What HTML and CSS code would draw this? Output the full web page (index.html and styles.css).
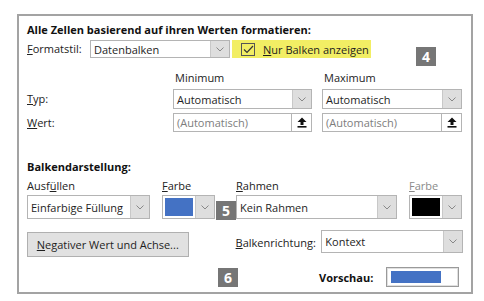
FILE: index.html
```html
<!DOCTYPE html>
<html lang="de">
<head>
    <meta charset="UTF-8">
    <title>Datenbalken formatieren</title>
    <link rel="stylesheet" href="styles.css">
</head>
<body>
    <div class="dialog">
        <div class="heading">Alle Zellen basierend auf ihren Werten formatieren:</div>

        <div class="style-row">
            <span class="label"><u>F</u>ormatstil:</span>
            <div class="dropdown style-select">
                <span class="value">Datenbalken</span>
                <span class="arrow"><svg width="8" height="5" viewBox="0 0 8 5"><path d="M0.5 0.5 L4 4 L7.5 0.5" fill="none" stroke="#888" stroke-width="1"/></svg></span>
            </div>
            <label class="only-bars">
                <span class="checkbox"><svg width="11" height="9" viewBox="0 0 11 9"><path d="M1 4.5 L4 7.5 L10 1" fill="none" stroke="#333" stroke-width="1.2"/></svg></span>
                <span><u>N</u>ur Balken anzeigen</span>
            </label>
        </div>

        <div class="minmax">
            <span></span>
            <span class="col-title">Minimum</span>
            <span class="col-title">Maximum</span>

            <span class="label"><u>T</u>yp:</span>
            <div class="dropdown">
                <span class="value">Automatisch</span>
                <span class="arrow"><svg width="8" height="5" viewBox="0 0 8 5"><path d="M0.5 0.5 L4 4 L7.5 0.5" fill="none" stroke="#888" stroke-width="1"/></svg></span>
            </div>
            <div class="dropdown">
                <span class="value">Automatisch</span>
                <span class="arrow"><svg width="8" height="5" viewBox="0 0 8 5"><path d="M0.5 0.5 L4 4 L7.5 0.5" fill="none" stroke="#888" stroke-width="1"/></svg></span>
            </div>

            <span class="label"><u>W</u>ert:</span>
            <div class="input">
                <span class="value muted">(Automatisch)</span>
                <span class="pick"><svg width="10" height="11" viewBox="0 0 10 11"><path d="M5 0.5 L9.5 5 L6.5 5 L6.5 8 L3.5 8 L3.5 5 L0.5 5 Z" fill="#111"/><rect x="0.5" y="9" width="9" height="1.6" fill="#111"/></svg></span>
            </div>
            <div class="input">
                <span class="value muted">(Automatisch)</span>
                <span class="pick"><svg width="10" height="11" viewBox="0 0 10 11"><path d="M5 0.5 L9.5 5 L6.5 5 L6.5 8 L3.5 8 L3.5 5 L0.5 5 Z" fill="#111"/><rect x="0.5" y="9" width="9" height="1.6" fill="#111"/></svg></span>
            </div>
        </div>

        <div class="heading section">Balkendarstellung:</div>

        <div class="bars">
            <span class="label">Ausf<u>ü</u>llen</span>
            <span class="label"><u>F</u>arbe</span>
            <span></span>
            <span class="label"><u>R</u>ahmen</span>
            <span class="label disabled"><u>F</u>arbe</span>

            <div class="dropdown tall fill-select">
                <span class="value">Einfarbige Füllung</span>
                <span class="arrow"><svg width="8" height="5" viewBox="0 0 8 5"><path d="M0.5 0.5 L4 4 L7.5 0.5" fill="none" stroke="#888" stroke-width="1"/></svg></span>
            </div>
            <div class="color tall">
                <span class="swatch blue"></span>
                <span class="arrow"><svg width="8" height="5" viewBox="0 0 8 5"><path d="M0.5 0.5 L4 4 L7.5 0.5" fill="none" stroke="#888" stroke-width="1"/></svg></span>
            </div>
            <span class="badge">5</span>
            <div class="dropdown tall border-select">
                <span class="value">Kein Rahmen</span>
                <span class="arrow"><svg width="8" height="5" viewBox="0 0 8 5"><path d="M0.5 0.5 L4 4 L7.5 0.5" fill="none" stroke="#888" stroke-width="1"/></svg></span>
            </div>
            <div class="color tall">
                <span class="swatch black"></span>
                <span class="arrow"><svg width="8" height="5" viewBox="0 0 8 5"><path d="M0.5 0.5 L4 4 L7.5 0.5" fill="none" stroke="#888" stroke-width="1"/></svg></span>
            </div>
        </div>

        <div class="axis-row">
            <button class="btn"><u>N</u>egativer Wert und Achse...</button>
            <span class="label direction-label"><u>B</u>alkenrichtung:</span>
            <div class="dropdown direction">
                <span class="value">Kontext</span>
                <span class="arrow"><svg width="8" height="5" viewBox="0 0 8 5"><path d="M0.5 0.5 L4 4 L7.5 0.5" fill="none" stroke="#888" stroke-width="1"/></svg></span>
            </div>
        </div>

        <div class="preview-row">
            <span class="badge">6</span>
            <span class="preview-label">Vorschau:</span>
            <div class="preview"><span class="preview-bar"></span></div>
        </div>

        <span class="badge badge-4">4</span>
    </div>
</body>
</html>
```

FILE: styles.css
```css
body {
    margin: 0;
    padding: 14px 0 0 17px;
    background-color: #fff;
    font-family: "Open Sans", "Noto Sans", Arial, sans-serif;
    font-size: 11px;
    color: #1e1e1e;
}

.dialog {
    position: relative;
    box-sizing: border-box;
    width: 456px;
    height: 280px;
    border: 2px solid #a3a3a3;
    padding: 6px 8px 0 8px;
}

u {
    text-decoration-thickness: 1px;
    text-underline-offset: 1px;
}

.heading {
    font-weight: 700;
    line-height: 15px;
    color: #111;
}

.label {
    line-height: 14px;
    color: #222;
}

.disabled {
    color: #8a8a8a;
}

/* dropdowns and inputs */
.dropdown,
.input,
.color {
    box-sizing: border-box;
    display: flex;
    align-items: stretch;
    border: 1px solid #b4b4b4;
    background-color: #fff;
}

.value {
    flex: 1;
    display: flex;
    align-items: center;
    padding-left: 3px;
    white-space: nowrap;
    overflow: hidden;
}

.muted {
    color: #7d7d7d;
}

.arrow {
    width: 18px;
    display: flex;
    align-items: center;
    justify-content: center;
    background-color: #dedede;
    border-left: 1px solid #c8c8c8;
}

.pick {
    width: 19px;
    display: flex;
    align-items: center;
    justify-content: center;
    border-left: 1px solid #b4b4b4;
}

/* Formatstil row */
.style-row {
    display: flex;
    align-items: center;
    margin-top: 3px;
    height: 18px;
}

.style-row .label {
    width: 63px;
}

.style-select {
    width: 140px;
    height: 18px;
}

.only-bars {
    display: flex;
    align-items: center;
    gap: 8px;
    margin-left: 2px;
    height: 18px;
    padding: 0 2px 0 9px;
    background-color: #f2ee64;
}

.checkbox {
    box-sizing: border-box;
    width: 14px;
    height: 13px;
    border: 1px solid #555;
    display: flex;
    align-items: center;
    justify-content: center;
}

/* Minimum / Maximum */
.minmax {
    display: grid;
    grid-template-columns: 136px 139px 140px;
    column-gap: 10px;
    grid-template-rows: 14px 20px 19px;
    row-gap: 4px;
    margin-top: 13px;
    align-items: center;
}

.minmax > .dropdown,
.minmax > .input {
    height: 100%;
}

.col-title {
    line-height: 14px;
    padding-left: 2px;
    color: #222;
}

/* Balkendarstellung */
.section {
    margin-top: 27px;
}

.bars {
    display: grid;
    grid-template-columns: 135px 53px 21px 173px 53px;
    grid-template-rows: 14px 24px;
    row-gap: 2px;
    margin-top: 5px;
}

.fill-select {
    width: 123px;
}

.border-select {
    width: 161px;
}

.color .swatch {
    flex: 1;
    margin: 2px;
}

.blue {
    background-color: #4472c4;
}

.black {
    background-color: #000;
}

.badge {
    display: flex;
    align-items: center;
    justify-content: center;
    width: 20px;
    height: 19px;
    background-color: #767676;
    color: #fff;
    font-weight: 700;
    font-size: 14px;
}

.bars .badge {
    align-self: end;
    margin-bottom: -1px;
    margin-left: 1px;
}

.badge-4 {
    position: absolute;
    left: 397px;
    top: 31px;
}

/* button row */
.axis-row {
    display: flex;
    align-items: flex-start;
    margin-top: 11px;
}

.btn {
    box-sizing: border-box;
    width: 162px;
    height: 25px;
    margin-top: 2px;
    border: 1px solid #b0b0b0;
    background-color: #e1e1e1;
    font-family: inherit;
    font-size: 11px;
    color: #1e1e1e;
    padding: 0;
}

.direction-label {
    margin-left: 47px;
    margin-top: 6px;
    width: 86px;
}

.direction {
    width: 142px;
    height: 23px;
}

/* Vorschau */
.preview-row {
    display: flex;
    align-items: center;
    margin-top: 10px;
    height: 20px;
}

.preview-row .badge {
    margin-left: 191px;
}

.preview-label {
    font-weight: 700;
    margin-left: 81px;
    width: 67px;
    color: #111;
}

.preview {
    box-sizing: border-box;
    width: 73px;
    height: 20px;
    border: 1px solid #9a9a9a;
    padding: 3px 17px 3px 4px;
    box-shadow: inset 0 0 0 1px #e0e0e0;
}

.preview-bar {
    display: block;
    height: 100%;
    background-color: #4472c4;
}
```
